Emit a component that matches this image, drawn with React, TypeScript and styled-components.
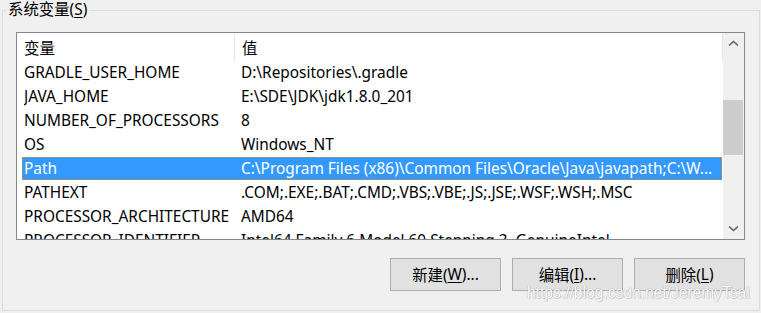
import React from "react";
import styled, { createGlobalStyle } from "styled-components";

const Global = createGlobalStyle`
  html, body { margin: 0; padding: 0; background: #f0f0f0; }
  body { font-family: "Noto Sans", "Noto Sans CJK SC", sans-serif; }
`;

const FONT = `"Noto Sans", "Noto Sans CJK SC", sans-serif`;

const Page = styled.div`
  position: relative;
  width: 761px;
  height: 313px;
  background: #f0f0f0;
  overflow: hidden;
  padding-left: 2px;
  box-sizing: border-box;
`;

const GroupBox = styled.fieldset`
  margin: 0;
  padding: 0;
  width: 758px;
  height: 311px;
  box-sizing: border-box;
  border: 1px solid #dcdcdc;
  min-inline-size: 0;
`;

const Legend = styled.legend`
  margin-left: 3px;
  padding: 0 2px;
  font-family: ${FONT};
  font-size: 15.4px;
  line-height: 20px;
  color: #000;
`;

const Content = styled.div`
  display: flex;
  flex-direction: column;
  padding: 12px 14px 0 13px;
`;

const ListView = styled.div`
  display: flex;
  height: 208px;
  box-sizing: border-box;
  border: 1px solid #828790;
  background: #fff;
  overflow: hidden;
`;

const ListBody = styled.div`
  flex: 1;
  min-width: 0;
  overflow: hidden;
  font-family: ${FONT};
  font-size: 15.4px;
  color: #000;
`;

const Header = styled.div`
  display: grid;
  grid-template-columns: 218px 487px 1px;
  height: 28px;
`;

const HeaderCell = styled.div<{ $divider?: boolean }>`
  display: flex;
  align-items: center;
  padding-left: 7px;
  box-sizing: border-box;
  border-right: ${(p) => (p.$divider ? "1px solid #e5e5e5" : "none")};
  height: 27px;
  margin-top: 1px;
`;

const HeaderEnd = styled.div`
  border-left: 1px solid #e5e5e5;
  height: 27px;
  margin-top: 1px;
`;

const Row = styled.div<{ $selected?: boolean }>`
  display: grid;
  grid-template-columns: 217px 1fr;
  align-items: center;
  height: 23px;
  margin: 0 0 1px 5px;
  width: 700px;
  padding-left: 2px;
  box-sizing: border-box;
  white-space: nowrap;
  background: ${(p) => (p.$selected ? "#3399ff" : "transparent")};
  color: ${(p) => (p.$selected ? "#fff" : "#000")};
  outline: ${(p) => (p.$selected ? "1px dotted #d98a3a" : "none")};
  outline-offset: -1px;
`;

const Cell = styled.span`
  overflow: hidden;
  line-height: 23px;
`;

const ScrollBar = styled.div`
  width: 21px;
  display: flex;
  flex-direction: column;
  background: #f0f0f0;
`;

const ScrollButton = styled.div`
  height: 21px;
  display: flex;
  align-items: center;
  justify-content: center;
  flex-shrink: 0;
`;

const Track = styled.div`
  flex: 1;
  padding: 46px 1px 0 0;
`;

const Thumb = styled.div`
  height: 55px;
  background: #cdcdcd;
`;

const ButtonRow = styled.div`
  display: flex;
  justify-content: flex-end;
  gap: 11px;
  margin-top: 18px;
`;

const Button = styled.button`
  width: 111px;
  height: 33px;
  box-sizing: border-box;
  background: #e1e1e1;
  border: 1px solid #adadad;
  font-family: ${FONT};
  font-size: 15.4px;
  color: #000;
  padding: 0;
  display: flex;
  align-items: center;
  justify-content: center;
`;

const U = styled.span`
  text-decoration: underline;
  text-underline-offset: 2px;
`;

const Watermark = styled.div`
  position: absolute;
  left: 527px;
  top: 284px;
  font-family: "Liberation Sans", Arial, sans-serif;
  font-size: 15.6px;
  line-height: 18px;
  color: #ffffff;
  text-shadow: 1px 1px 0 rgba(0, 0, 0, 0.1), 0 0 1px rgba(0, 0, 0, 0.45);
  white-space: nowrap;
`;

const Chevron = ({ down }: { down?: boolean }) => (
  <svg width="11" height="7" viewBox="0 0 11 7">
    <polyline
      points={down ? "1,1.5 5.5,5.5 10,1.5" : "1,5.5 5.5,1.5 10,5.5"}
      fill="none"
      stroke="#606060"
      strokeWidth="1.6"
    />
  </svg>
);

const rows: [string, string][] = [
  ["GRADLE_USER_HOME", "D:\\Repositories\\.gradle"],
  ["JAVA_HOME", "E:\\SDE\\JDK\\jdk1.8.0_201"],
  ["NUMBER_OF_PROCESSORS", "8"],
  ["OS", "Windows_NT"],
  ["Path", "C:\\Program Files (x86)\\Common Files\\Oracle\\Java\\javapath;C:\\W..."],
  ["PATHEXT", ".COM;.EXE;.BAT;.CMD;.VBS;.VBE;.JS;.JSE;.WSF;.WSH;.MSC"],
  ["PROCESSOR_ARCHITECTURE", "AMD64"],
  ["PROCESSOR_IDENTIFIER", "Intel64 Family 6 Model 60 Stepping 3, GenuineIntel"],
];

export default function App() {
  return (
    <>
      <Global />
      <Page>
        <GroupBox>
          <Legend>
            系统变量(<U>S</U>)
          </Legend>
          <Content>
            <ListView>
              <ListBody>
                <Header>
                  <HeaderCell $divider>变量</HeaderCell>
                  <HeaderCell>值</HeaderCell>
                  <HeaderEnd />
                </Header>
                {rows.map(([k, v]) => (
                  <Row key={k} $selected={k === "Path"}>
                    <Cell>{k}</Cell>
                    <Cell>{v}</Cell>
                  </Row>
                ))}
              </ListBody>
              <ScrollBar>
                <ScrollButton>
                  <Chevron />
                </ScrollButton>
                <Track>
                  <Thumb />
                </Track>
                <ScrollButton>
                  <Chevron down />
                </ScrollButton>
              </ScrollBar>
            </ListView>
            <ButtonRow>
              <Button>
                新建(<U>W</U>)...
              </Button>
              <Button>
                编辑(<U>I</U>)...
              </Button>
              <Button>
                删除(<U>L</U>)
              </Button>
            </ButtonRow>
          </Content>
        </GroupBox>
        <Watermark>https://blog.csdn.net/JeremyTsai</Watermark>
      </Page>
    </>
  );
}
